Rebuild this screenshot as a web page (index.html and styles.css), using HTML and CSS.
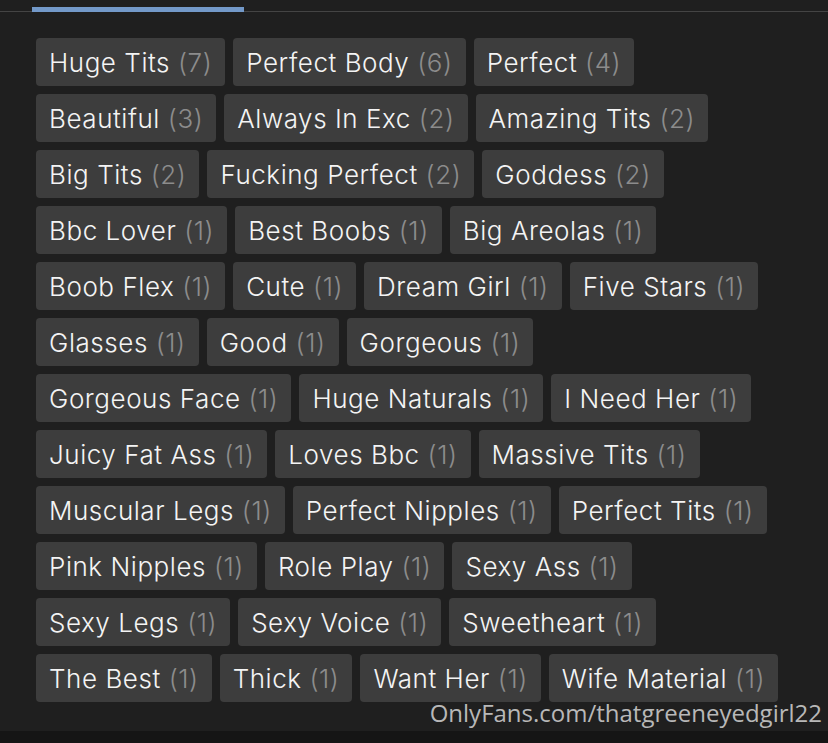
FILE: index.html
```html
<!DOCTYPE html>
<html lang="en">
<head>
<meta charset="utf-8">
<link rel="stylesheet" href="styles.css">
</head>
<body>
<div class="page">
  <div class="tabs"><div class="tab-active"></div></div>
  <div class="tags">
    <div class="row">
      <span class="tag">Huge Tits <span class="count">(7)</span></span>
      <span class="tag">Perfect Body <span class="count">(6)</span></span>
      <span class="tag">Perfect <span class="count">(4)</span></span>
    </div>
    <div class="row">
      <span class="tag">Beautiful <span class="count">(3)</span></span>
      <span class="tag">Always In Exc <span class="count">(2)</span></span>
      <span class="tag">Amazing Tits <span class="count">(2)</span></span>
    </div>
    <div class="row">
      <span class="tag">Big Tits <span class="count">(2)</span></span>
      <span class="tag">Fucking Perfect <span class="count">(2)</span></span>
      <span class="tag">Goddess <span class="count">(2)</span></span>
    </div>
    <div class="row">
      <span class="tag">Bbc Lover <span class="count">(1)</span></span>
      <span class="tag">Best Boobs <span class="count">(1)</span></span>
      <span class="tag">Big Areolas <span class="count">(1)</span></span>
    </div>
    <div class="row">
      <span class="tag">Boob Flex <span class="count">(1)</span></span>
      <span class="tag">Cute <span class="count">(1)</span></span>
      <span class="tag">Dream Girl <span class="count">(1)</span></span>
      <span class="tag">Five Stars <span class="count">(1)</span></span>
    </div>
    <div class="row">
      <span class="tag">Glasses <span class="count">(1)</span></span>
      <span class="tag">Good <span class="count">(1)</span></span>
      <span class="tag">Gorgeous <span class="count">(1)</span></span>
    </div>
    <div class="row">
      <span class="tag">Gorgeous Face <span class="count">(1)</span></span>
      <span class="tag">Huge Naturals <span class="count">(1)</span></span>
      <span class="tag">I Need Her <span class="count">(1)</span></span>
    </div>
    <div class="row">
      <span class="tag">Juicy Fat Ass <span class="count">(1)</span></span>
      <span class="tag">Loves Bbc <span class="count">(1)</span></span>
      <span class="tag">Massive Tits <span class="count">(1)</span></span>
    </div>
    <div class="row">
      <span class="tag">Muscular Legs <span class="count">(1)</span></span>
      <span class="tag">Perfect Nipples <span class="count">(1)</span></span>
      <span class="tag">Perfect Tits <span class="count">(1)</span></span>
    </div>
    <div class="row">
      <span class="tag">Pink Nipples <span class="count">(1)</span></span>
      <span class="tag">Role Play <span class="count">(1)</span></span>
      <span class="tag">Sexy Ass <span class="count">(1)</span></span>
    </div>
    <div class="row">
      <span class="tag">Sexy Legs <span class="count">(1)</span></span>
      <span class="tag">Sexy Voice <span class="count">(1)</span></span>
      <span class="tag">Sweetheart <span class="count">(1)</span></span>
    </div>
    <div class="row">
      <span class="tag">The Best <span class="count">(1)</span></span>
      <span class="tag">Thick <span class="count">(1)</span></span>
      <span class="tag">Want Her <span class="count">(1)</span></span>
      <span class="tag">Wife Material <span class="count">(1)</span></span>
    </div>
  </div>
  <div class="watermark">OnlyFans.com/thatgreeneyedgirl22</div>
</div>
<div class="bottom-band"></div>
</body>
</html>
```
FILE: styles.css
```css
html, body {
  margin: 0;
  padding: 0;
  background: #1f1f1f;
}
body {
  width: 828px;
  height: 743px;
  overflow: hidden;
  font-family: Inter, "Noto Sans", sans-serif;
}
.page {
  height: 731px;
  position: relative;
}
.tabs {
  height: 12px;
  border-bottom: 1px solid #444444;
  box-sizing: border-box;
  padding-left: 32px;
  display: flex;
  align-items: flex-end;
}
.tab-active {
  width: 212px;
  height: 5px;
  margin-bottom: -1px;
  background: #7399c9;
}
.tags {
  display: flex;
  flex-direction: column;
  gap: 8px;
  padding: 26px 0 0 36px;
}
.row {
  display: flex;
  gap: 8px;
}
.tag {
  display: flex;
  align-items: center;
  height: 48px;
  padding: 0 13px;
  background: #3d3d3d;
  border-radius: 4px;
  color: #f4f4f4;
  font-size: 26px;
  font-weight: 300;
  letter-spacing: 0.55px;
  white-space: pre;
}
.count {
  color: #8c8c8c;
}
.watermark {
  position: absolute;
  right: 6px;
  top: 696px;
  font-family: "Open Sans", sans-serif;
  font-size: 24px;
  color: #b8b8b8;
}
.bottom-band {
  height: 12px;
  background: #151515;
}
```
